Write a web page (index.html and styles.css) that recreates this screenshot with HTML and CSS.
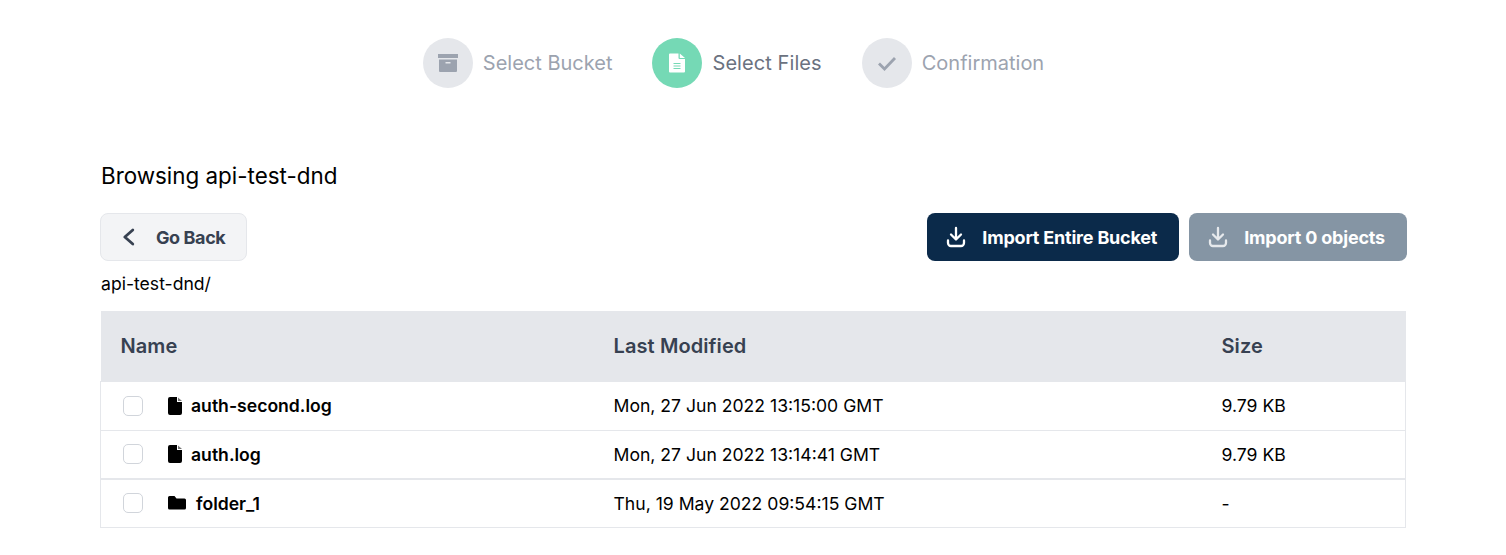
FILE: index.html
```html
<!DOCTYPE html>
<html lang="en">
<head>
    <meta charset="UTF-8">
    <title>Select Files</title>
    <link rel="stylesheet" href="styles.css">
</head>
<body>
    <ol class="steps">
        <li class="step">
            <span class="step-icon">
                <svg width="20" height="20" viewBox="0 0 20 20" fill="#9ca3af"><path d="M0 1h20v4H0z"/><path fill-rule="evenodd" d="M1 6.500h18V18a1 1 0 0 1-1 1H2a1 1 0 0 1-1-1V6.500zm6.500 2.500v1.500h5V9H7.500z"/></svg>
            </span>
            <span class="step-label">Select Bucket</span>
        </li>
        <li class="step step-active">
            <span class="step-icon">
                <svg width="20" height="20" viewBox="0 0 20 20" fill="#fff"><path fill-rule="evenodd" d="M2 1.500a1 1 0 0 1 1-1h8.500v4.500a1 1 0 0 0 1 1H18v12.500a1 1 0 0 1-1 1H3a1 1 0 0 1-1-1V1.500zM6.500 10v1h7v-1h-7zm0 2.500v1h7v-1h-7zm0 2.500v1h7v-1h-7z"/><path d="M12.800.5L18 5h-5.200z"/></svg>
            </span>
            <span class="step-label">Select Files</span>
        </li>
        <li class="step">
            <span class="step-icon">
                <svg width="20" height="20" viewBox="0 0 20 20" fill="none" stroke="#9ca3af" stroke-width="2.800"><path d="M2 10.500l5.500 5.500L18 5"/></svg>
            </span>
            <span class="step-label">Confirmation</span>
        </li>
    </ol>

    <main class="browser">
        <h2 class="browser-title">Browsing api-test-dnd</h2>

        <div class="toolbar">
            <button class="btn btn-back">
                <svg width="24" height="24" viewBox="0 0 24 24" fill="none" stroke="#374151" stroke-width="2.800" stroke-linecap="round" stroke-linejoin="round"><path d="M14.800 5l-8 7 8 7"/></svg>
                Go Back
            </button>
            <div class="toolbar-actions">
                <button class="btn btn-primary">
                    <svg class="download" width="24" height="24" viewBox="0 0 24 24" fill="none" stroke="#fff" stroke-width="2.300" stroke-linecap="round" stroke-linejoin="round"><path d="M12 3v11.500M7 9.500l5 5 5-5M4 15.500v2.500a3 3 0 0 0 3 3h10a3 3 0 0 0 3-3v-2.500"/></svg>
                    Import Entire Bucket
                </button>
                <button class="btn btn-primary btn-disabled">
                    <svg class="download" width="24" height="24" viewBox="0 0 24 24" fill="none" stroke="#fff" stroke-width="2.300" stroke-linecap="round" stroke-linejoin="round"><path d="M12 3v11.500M7 9.500l5 5 5-5M4 15.500v2.500a3 3 0 0 0 3 3h10a3 3 0 0 0 3-3v-2.500"/></svg>
                    Import 0 objects
                </button>
            </div>
        </div>

        <p class="path">api-test-dnd/</p>

        <table class="files">
            <thead>
                <tr>
                    <th class="col-name">Name</th>
                    <th class="col-date">Last Modified</th>
                    <th>Size</th>
                </tr>
            </thead>
            <tbody>
                <tr>
                    <td>
                        <div class="file">
                            <span class="check"></span>
                            <svg class="file-icon" width="14" height="18" viewBox="0.5 0 14 18" fill="#000"><path d="M2.500 0h7v5h5V16a2 2 0 0 1-2 2h-10a2 2 0 0 1-2-2V2a2 2 0 0 1 2-2z"/><path d="M10.500 .5l4 3.500h-4z" fill="#777"/></svg>
                            <span class="file-name">auth-second.log</span>
                        </div>
                    </td>
                    <td>Mon, 27 Jun 2022 13:15:00 GMT</td>
                    <td>9.79 KB</td>
                </tr>
                <tr>
                    <td>
                        <div class="file">
                            <span class="check"></span>
                            <svg class="file-icon" width="14" height="18" viewBox="0.5 0 14 18" fill="#000"><path d="M2.500 0h7v5h5V16a2 2 0 0 1-2 2h-10a2 2 0 0 1-2-2V2a2 2 0 0 1 2-2z"/><path d="M10.500 .5l4 3.500h-4z" fill="#777"/></svg>
                            <span class="file-name">auth.log</span>
                        </div>
                    </td>
                    <td>Mon, 27 Jun 2022 13:14:41 GMT</td>
                    <td>9.79 KB</td>
                </tr>
                <tr class="row-folder">
                    <td>
                        <div class="file">
                            <span class="check"></span>
                            <svg class="folder-icon" width="18" height="18" viewBox="0 0 18 18" fill="#000"><path d="M0 3.500a1.500 1.500 0 0 1 1.500-1.500h5l2 2.500h8a1.500 1.500 0 0 1 1.500 1.500v8a1.500 1.500 0 0 1-1.500 1.500h-15a1.500 1.500 0 0 1-1.500-1.500z"/></svg>
                            <span class="file-name">folder_1</span>
                        </div>
                    </td>
                    <td>Thu, 19 May 2022 09:54:15 GMT</td>
                    <td>-</td>
                </tr>
            </tbody>
        </table>
    </main>
</body>
</html>
```

FILE: styles.css
```css
* {
    box-sizing: border-box;
}
body {
    margin: 0;
    font-family: Inter, "Liberation Sans", sans-serif;
    color: #000;
    background-color: #fff;
}
.steps {
    display: flex;
    justify-content: center;
    list-style: none;
    margin: 0;
    padding: 38px 0 0 1px;
    height: 162px;
}
.step {
    display: flex;
    align-items: center;
    gap: 10px;
    height: 50px;
    padding-right: 40px;
    font-size: 20px;
    color: #9ca3af;
}
.step-icon {
    display: flex;
    align-items: center;
    justify-content: center;
    width: 50px;
    height: 50px;
    border-radius: 50%;
    background-color: #e5e7eb;
}
.step-active .step-icon {
    background-color: #75d9b5;
}
.step-active .step-label {
    color: #6b7280;
    letter-spacing: 0.08px;
}
.browser {
    margin: 0 99px 0 100px;
}
.browser-title {
    margin: 0;
    padding-left: 1px;
    font-size: 22.4px;
    font-weight: 400;
    line-height: 28px;
}
.toolbar {
    display: flex;
    justify-content: space-between;
    margin-top: 23px;
}
.toolbar-actions {
    display: flex;
    gap: 10px;
}
.btn {
    display: flex;
    align-items: center;
    height: 48px;
    border-radius: 8px;
    border: 0;
    font-family: inherit;
    font-size: 18px;
    font-weight: 700;
    letter-spacing: -0.2px;
}
.btn-back {
    width: 147px;
    gap: 14px;
    padding: 0 0 0 17px;
    border: 1px solid #e5e7eb;
    background-color: #f3f4f6;
    color: #374151;
    letter-spacing: -0.4px;
}
.btn-primary {
    gap: 14px;
    padding: 0 22px 0 17px;
    background-color: #0b2a4a;
    color: #fff;
}
.btn-disabled {
    background-color: #8595a4;
}
.btn-disabled .download {
    opacity: 0.8;
}
.path {
    margin: 11px 0 0 0;
    padding-left: 1px;
    font-size: 17.6px;
    line-height: 24px;
}
.files {
    width: 1306px;
    margin-top: 15px;
    border-collapse: collapse;
    table-layout: fixed;
    font-size: 17.6px;
}
.files th {
    height: 70px;
    padding: 0 0 0 20px;
    text-align: left;
    font-size: 20px;
    font-weight: 600;
    letter-spacing: 0.1px;
    color: #374151;
    background-color: #e5e7eb;
}
.col-name {
    width: 493px;
}
.col-date {
    width: 608px;
}
.files td {
    height: 49px;
    padding: 0 0 0 20px;
    border-top: 1px solid #e5e7eb;
    border-bottom: 1px solid #e5e7eb;
}
.files tr td:first-child {
    border-left: 1px solid #e5e7eb;
}
.files tr td:last-child {
    border-right: 1px solid #e5e7eb;
}
.row-folder td {
    height: 48px;
    border-top-width: 2px;
}
.file {
    display: flex;
    align-items: center;
}
.check {
    width: 20px;
    height: 20px;
    margin-left: 2px;
    border: 1px solid #d1d5db;
    border-radius: 5px;
}
.file-icon {
    margin-left: 25px;
}
.folder-icon {
    margin-left: 25px;
}
.file-name {
    margin-left: 9px;
    font-weight: 600;
}
.folder-icon + .file-name {
    margin-left: 10px;
}
```
